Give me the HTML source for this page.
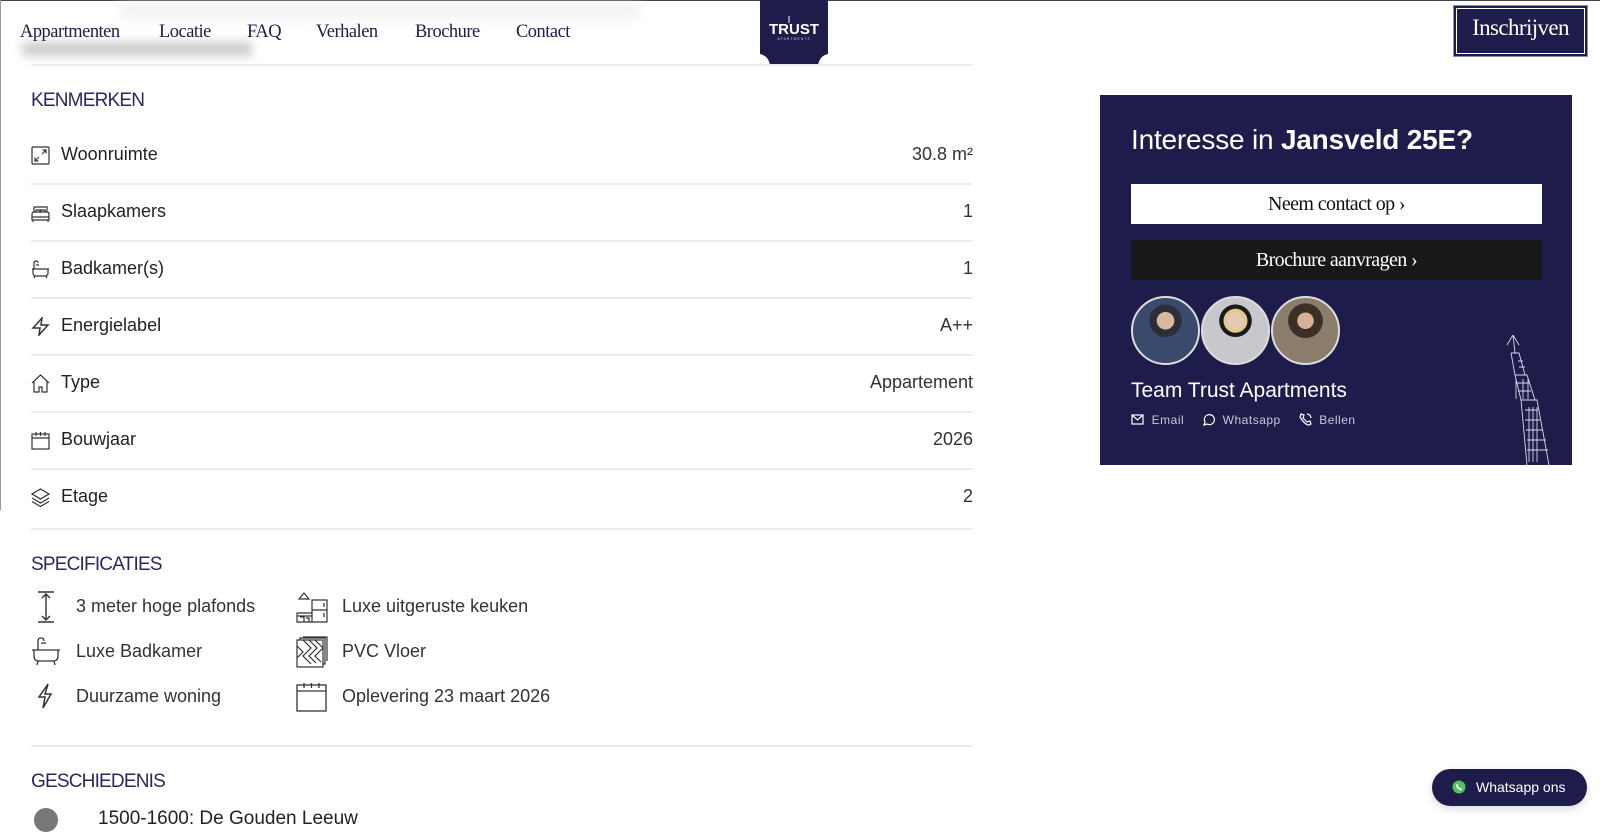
<!DOCTYPE html>
<html><head><meta charset="utf-8"><style>
*{margin:0;padding:0;box-sizing:border-box}
body{width:1600px;height:818px;overflow:hidden;background:#fff;position:relative;font-family:"Liberation Sans",sans-serif;color:#222}
.a{position:absolute}
.nav{font-family:"Liberation Serif",serif;font-size:19px;color:#1d1c4a;top:21px;letter-spacing:-0.5px;transform:scaleX(.97);transform-origin:left}
.h{font-size:19px;color:#2a295c;letter-spacing:-0.8px;left:31px}
.row{left:31px;width:942px;height:57px;border-bottom:2px solid #ececec}
.row .ic{position:absolute;left:0;width:19px;height:19px}
.row .t{position:absolute;left:30px;font-size:18px;color:#222}
.row .v{position:absolute;right:0;font-size:18px;color:#333}
.sp{font-size:18px;color:#333}
.line{height:2px;background:#ececec}
</style></head><body>
<div class="a" style="left:0;top:0;width:1600px;height:1px;background:#444"></div>
<div class="a" style="left:0;top:0;width:1px;height:510px;background:#999"></div>
<div class="a" style="left:120px;top:5px;width:520px;height:12px;background:#eee;filter:blur(6px)"></div>
<div class="a" style="left:22px;top:42px;width:230px;height:14px;background:#ccc;filter:blur(5px)"></div>
<div class="a nav" style="left:20px">Appartmenten</div>
<div class="a nav" style="left:159px">Locatie</div>
<div class="a nav" style="left:247px">FAQ</div>
<div class="a nav" style="left:316px">Verhalen</div>
<div class="a nav" style="left:415px">Brochure</div>
<div class="a nav" style="left:516px">Contact</div>
<svg class="a" style="left:759px;top:0" width="70" height="67" viewBox="0 0 70 67"><path d="M1 0H69V54Q60 56 59 66H11Q10 56 1 54Z" fill="#1d1c4a"/><text x="35" y="34" fill="#fff" font-family="Liberation Sans" font-weight="bold" font-size="15" text-anchor="middle">TRUST</text><text x="35" y="40" fill="#ccc" font-family="Liberation Sans" font-size="3.5" text-anchor="middle" letter-spacing="1">APARTMENTS</text><line x1="30" y1="16" x2="30" y2="23" stroke="#fff" stroke-width="1"/></svg>
<div class="a" style="left:1453px;top:5px;width:135px;height:52px;background:#1d1c4a;border:1px solid #8a89b0;box-shadow:inset 0 0 0 2px #1d1c4a,inset 0 0 0 3px #fff"></div>
<div class="a" style="left:1453px;top:15px;width:135px;text-align:center;font-family:'Liberation Serif',serif;font-size:23px;color:#fff;letter-spacing:-0.6px">Inschrijven</div>
<div class="a" style="left:31px;top:64px;width:942px;height:2px;background:#ececec"></div>

<div class="a h" style="top:90px">KENMERKEN</div>
<div class="a row" style="top:128px"><svg class="ic" style="top:18px" viewBox="0 0 19 19" fill="none" stroke="#333" stroke-width="1.2"><rect x="1" y="1" width="17" height="17" rx="1"/><path d="M4 15l4-4M4 11.5V15h3.5M15 4l-4 4M15 7.5V4h-3.5"/></svg><span class="t" style="top:16px">Woonruimte</span><span class="v" style="top:16px">30.8 m²</span></div>
<div class="a row" style="top:185px"><svg class="ic" style="top:19px" viewBox="0 0 19 19" fill="none" stroke="#333" stroke-width="1.2"><path d="M3 8V3h13v5M1 13V10q0-2 2-2h13q2 0 2 2v3M1 13h17v3H1zM2 16v2M17 16v2M5 8V6h4v2M10 8V6h4v2"/></svg><span class="t" style="top:16px">Slaapkamers</span><span class="v" style="top:16px">1</span></div>
<div class="a row" style="top:242px"><svg class="ic" style="top:18px" viewBox="0 0 19 19" fill="none" stroke="#333" stroke-width="1.2"><path d="M3 9V3q0-2 2-2t2 2M5 5h3M1 9h17M2 9v4q0 3 3 3h9q3 0 3-3V9M4 16l-1 2M15 16l1 2"/></svg><span class="t" style="top:16px">Badkamer(s)</span><span class="v" style="top:16px">1</span></div>
<div class="a row" style="top:299px"><svg class="ic" style="top:18px" viewBox="0 0 19 19" fill="none" stroke="#333" stroke-width="1.5"><path d="M11 1L2 11h7l-1 7 9-10h-7z"/></svg><span class="t" style="top:16px">Energielabel</span><span class="v" style="top:16px">A++</span></div>
<div class="a row" style="top:356px"><svg class="ic" style="top:18px" viewBox="0 0 19 19" fill="none" stroke="#333" stroke-width="1.2"><path d="M1 9L9.5 1 18 9M3 7v11h5v-5h3v5h5V7"/></svg><span class="t" style="top:16px">Type</span><span class="v" style="top:16px">Appartement</span></div>
<div class="a row" style="top:413px"><svg class="ic" style="top:18px" viewBox="0 0 19 19" fill="none" stroke="#333" stroke-width="1.2"><rect x="1" y="3" width="17" height="15"/><path d="M1 7h17M5 1v4M9.5 1v4M14 1v4"/></svg><span class="t" style="top:16px">Bouwjaar</span><span class="v" style="top:16px">2026</span></div>
<div class="a row" style="top:470px;height:60px"><svg class="ic" style="top:18px" viewBox="0 0 19 19" fill="none" stroke="#333" stroke-width="1.2"><path d="M9.5 1L18 6l-8.5 5L1 6zM1 10l8.5 5 8.5-5M1 13.5l8.5 5 8.5-5"/></svg><span class="t" style="top:16px">Etage</span><span class="v" style="top:16px">2</span></div>

<div class="a h" style="top:554px">SPECIFICATIES</div>
<svg class="a" style="left:34px;top:591px" width="24" height="32" viewBox="0 0 24 32" fill="none" stroke="#333" stroke-width="1.4"><path d="M4 1h16M4 31h16M12 3v26M8 7l4-4 4 4M8 25l4 4 4-4"/></svg>
<div class="a sp" style="left:76px;top:596px">3 meter hoge plafonds</div>
<svg class="a" style="left:31px;top:637px" width="30" height="30" viewBox="0 0 30 30" fill="none" stroke="#333" stroke-width="1.3"><path d="M7 13V4q0-3 3-3t3 3M10 6h5M1 13h28M3 13v6q0 5 5 5h14q5 0 5-5v-6M7 24l-1 4M23 24l1 4"/></svg>
<div class="a sp" style="left:76px;top:641px">Luxe Badkamer</div>
<svg class="a" style="left:37px;top:683px" width="16" height="26" viewBox="0 0 16 26" fill="none" stroke="#333" stroke-width="1.5"><path d="M11 1L2 14h6l-2 11 8-14H8z"/></svg>
<div class="a sp" style="left:76px;top:686px">Duurzame woning</div>
<svg class="a" style="left:296px;top:591px" width="32" height="32" viewBox="0 0 32 32" fill="none" stroke="#333" stroke-width="1.2"><path d="M3 8l5-6 5 6zM16 9h15v22H16zM16 19h15M1 22h15v9H1zM1 25h15M4 26h4v5M10 27h3v4M28 12v4M28 22v4"/></svg>
<div class="a sp" style="left:342px;top:596px">Luxe uitgeruste keuken</div>
<svg class="a" style="left:296px;top:636px" width="32" height="32" viewBox="0 0 32 32" fill="none" stroke="#333" stroke-width="1.2"><rect x="1" y="4" width="26" height="27"/><path d="M4 4V2h25v26h-2M7 1h24v24M1 10l6 6-6 6M7 4l8 8-8 8 8 8M13 4l8 8-8 8 7 7M19 4l8 8-8 8 6 6"/></svg>
<div class="a sp" style="left:342px;top:641px">PVC Vloer</div>
<svg class="a" style="left:296px;top:682px" width="32" height="30" viewBox="0 0 32 30" fill="none" stroke="#333" stroke-width="1.3"><rect x="1" y="3" width="29" height="26"/><path d="M1 9h29M8 1v5M15.5 1v5M23 1v5"/></svg>
<div class="a sp" style="left:342px;top:686px">Oplevering 23 maart 2026</div>

<div class="a line" style="left:31px;top:745px;width:942px"></div>
<div class="a h" style="top:771px">GESCHIEDENIS</div>
<div class="a" style="left:34px;top:808px;width:24px;height:24px;border-radius:50%;background:#777"></div>
<div class="a" style="left:98px;top:808px;font-size:19px;color:#222">1500-1600: De Gouden Leeuw</div>

<div class="a" style="left:1100px;top:95px;width:472px;height:370px;background:#1d1c4a;overflow:hidden">
  <div class="a" style="left:31px;top:29px;font-size:28px;color:#fff;letter-spacing:-0.2px">Interesse in <span style="font-weight:bold">Jansveld 25E?</span></div>
  <div class="a" style="left:31px;top:89px;width:411px;height:40px;background:#fff;text-align:center;line-height:40px;font-family:'Liberation Serif',serif;font-size:20px;color:#111;letter-spacing:-0.6px">Neem contact op ›</div>
  <div class="a" style="left:31px;top:145px;width:411px;height:40px;background:#18181b;text-align:center;line-height:40px;font-family:'Liberation Serif',serif;font-size:20px;color:#fff;letter-spacing:-0.6px">Brochure aanvragen ›</div>
  <div class="a" style="left:31px;top:201px;width:69px;height:69px;border-radius:50%;border:2px solid #ddd;background:radial-gradient(circle at 50% 35%,#d9b8a0 0 16%,#2c2f3a 17% 30%,#3a4a6c 31%)"></div>
  <div class="a" style="left:101px;top:201px;width:69px;height:69px;border-radius:50%;border:2px solid #ddd;background:radial-gradient(circle at 50% 35%,#e6c9b3 0 15%,#e2c88e 16% 22%,#1a1a1a 23% 30%,#c8c8cc 31%)"></div>
  <div class="a" style="left:171px;top:201px;width:69px;height:69px;border-radius:50%;border:2px solid #ddd;background:radial-gradient(circle at 50% 35%,#d8b09a 0 15%,#3b3026 16% 32%,#8a7d6c 33%)"></div>
  <div class="a" style="left:31px;top:284px;font-size:21px;color:#fff">Team Trust Apartments</div>
  <div class="a" style="left:31px;top:318px;font-size:12px;color:#c8c8dc;letter-spacing:0.5px;white-space:nowrap">
    <svg width="13" height="11" viewBox="0 0 13 11" fill="none" stroke="#fff" stroke-width="1.2" style="vertical-align:-1px"><rect x="1" y="1" width="11" height="9"/><path d="M1 1l5.5 5L12 1"/></svg>&nbsp; Email
    <svg width="13" height="13" viewBox="0 0 13 13" fill="none" stroke="#fff" stroke-width="1.2" style="vertical-align:-2px;margin-left:14px"><path d="M2 12l1-3a5 5 0 1 1 2 2z"/></svg>&nbsp; Whatsapp
    <svg width="13" height="13" viewBox="0 0 13 13" fill="none" stroke="#fff" stroke-width="1.2" style="vertical-align:-2px;margin-left:14px"><path d="M2 1l3 1-1 3 4 4 3-1 1 3-2 1Q6 12 1 4z M8 1a4 4 0 0 1 4 4"/></svg>&nbsp; Bellen
  </div>
  <svg class="a" style="left:405px;top:240px" width="67" height="130" viewBox="0 0 67 130" fill="none" stroke="#d8d8ec" stroke-width="0.9"><path d="M8 0l2 18M6 18h8l6 22M6 18l4 22M10 40h12l8 25M10 40l6 25M16 65h16l12 65M16 65l6 65M20 75h13M20 85h15M21 95h17M22 105h19M22 115h21M24 72v55M28 72v55M32 72v55M13 26h5M14 32h6M12 48h12M13 56h13M11 44v20M18 44v20M23 44v20M2 10l6-10M14 10l-6-10"/></svg>
</div>

<div class="a" style="left:1432px;top:769px;width:155px;height:37px;border-radius:19px;background:#1d1c4a;box-shadow:0 3px 8px rgba(0,0,0,.15)"></div>
<svg class="a" style="left:1452px;top:780px" width="14" height="14" viewBox="0 0 14 14"><circle cx="7" cy="7" r="6.5" fill="#4fc35a"/><path d="M4.5 4l1.5 0.5 0 1.5 2 2 1.5 0 0.5 1.5-1 1Q6 10 4 6z" fill="#fff"/></svg>
<div class="a" style="left:1476px;top:779px;font-size:14px;color:#fff">Whatsapp ons</div>
</body></html>
